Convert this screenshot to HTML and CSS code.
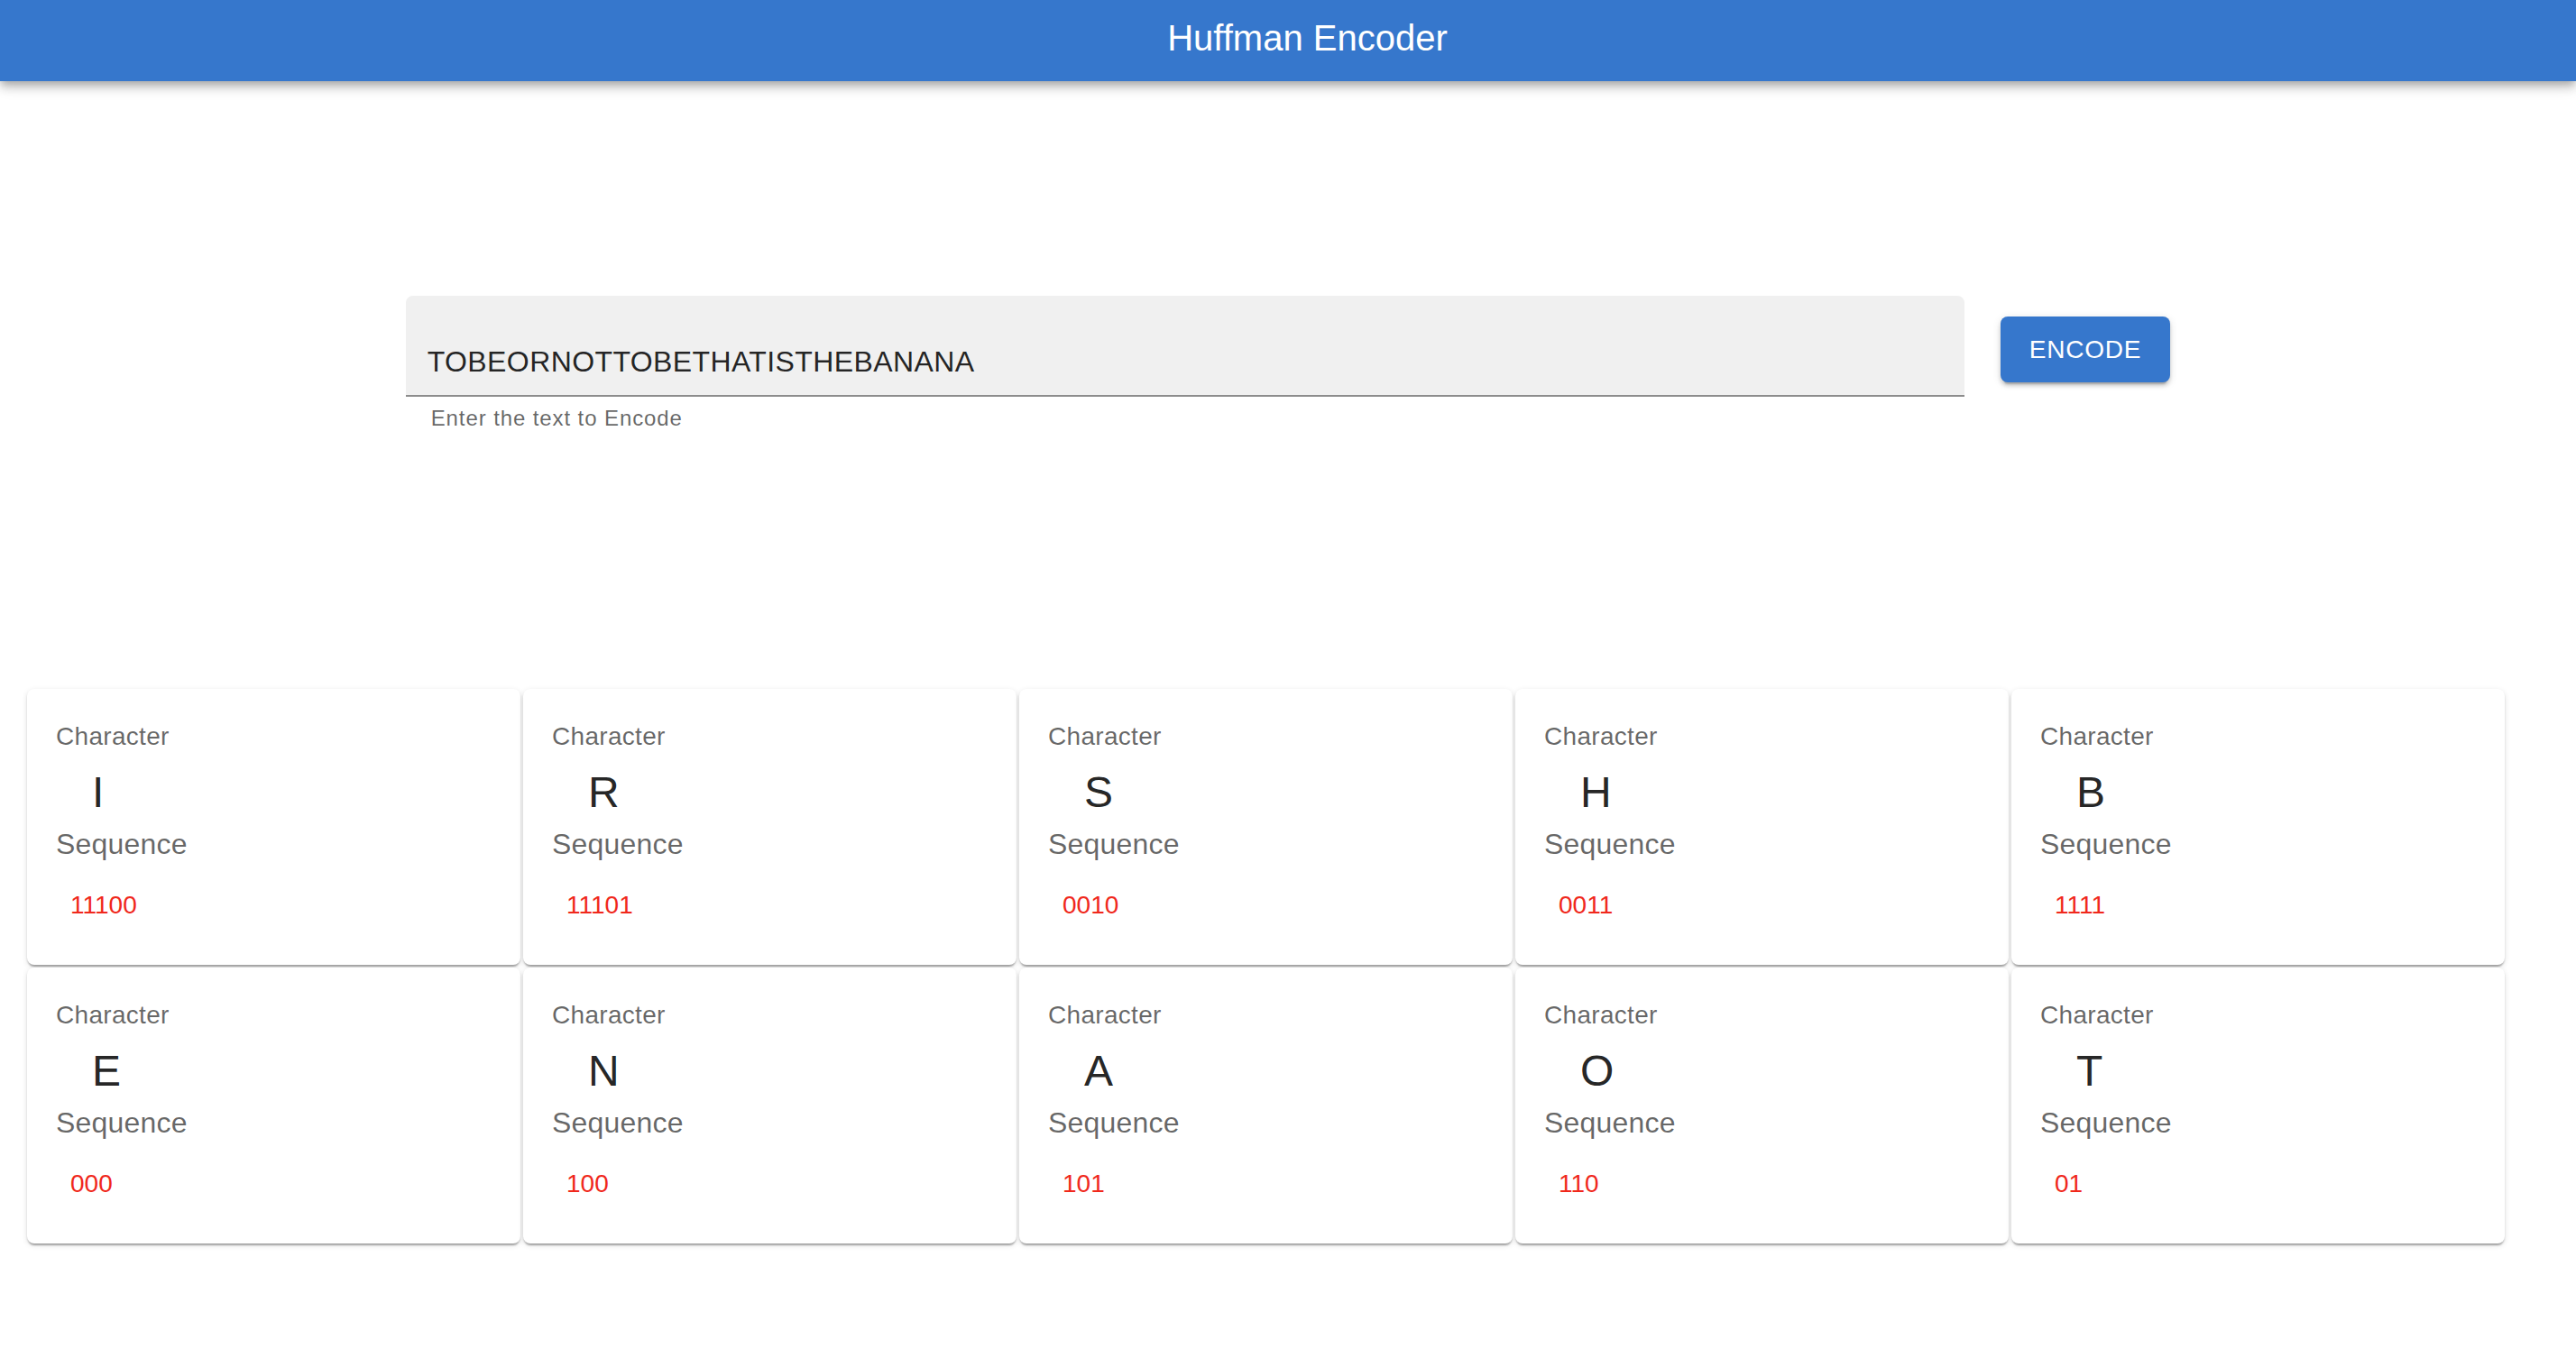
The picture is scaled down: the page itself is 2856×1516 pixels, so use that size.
FILE: index.html
```html
<!DOCTYPE html>
<html lang="en">
<head>
<meta charset="utf-8">
<title>Huffman Encoder</title>
<link rel="stylesheet" href="styles.css">
</head>
<body>
<header class="appbar">
  <h1 class="appbar-title">Huffman Encoder</h1>
</header>
<main class="page">
  <section class="encoder">
    <div class="field">
      <div class="input-box"><span class="input-text">TOBEORNOTTOBETHATISTHEBANANA</span></div>
      <p class="helper">Enter the text to Encode</p>
    </div>
    <button class="btn" type="button">ENCODE</button>
  </section>
  <section class="cards">
    <div class="card"><p class="card-label">Character</p><p class="card-char">I</p><p class="card-seq-label">Sequence</p><p class="card-seq">11100</p></div>
    <div class="card"><p class="card-label">Character</p><p class="card-char">R</p><p class="card-seq-label">Sequence</p><p class="card-seq">11101</p></div>
    <div class="card"><p class="card-label">Character</p><p class="card-char">S</p><p class="card-seq-label">Sequence</p><p class="card-seq">0010</p></div>
    <div class="card"><p class="card-label">Character</p><p class="card-char">H</p><p class="card-seq-label">Sequence</p><p class="card-seq">0011</p></div>
    <div class="card"><p class="card-label">Character</p><p class="card-char">B</p><p class="card-seq-label">Sequence</p><p class="card-seq">1111</p></div>
    <div class="card"><p class="card-label">Character</p><p class="card-char">E</p><p class="card-seq-label">Sequence</p><p class="card-seq">000</p></div>
    <div class="card"><p class="card-label">Character</p><p class="card-char">N</p><p class="card-seq-label">Sequence</p><p class="card-seq">100</p></div>
    <div class="card"><p class="card-label">Character</p><p class="card-char">A</p><p class="card-seq-label">Sequence</p><p class="card-seq">101</p></div>
    <div class="card"><p class="card-label">Character</p><p class="card-char">O</p><p class="card-seq-label">Sequence</p><p class="card-seq">110</p></div>
    <div class="card"><p class="card-label">Character</p><p class="card-char">T</p><p class="card-seq-label">Sequence</p><p class="card-seq">01</p></div>
  </section>
</main>
</body>
</html>
```
FILE: styles.css
```css
* {
  box-sizing: border-box;
}

html, body {
  margin: 0;
  padding: 0;
  background: #ffffff;
}

body {
  font-family: "Liberation Sans", Arial, Helvetica, sans-serif;
  color: rgba(0, 0, 0, 0.87);
}

p, h1 {
  margin: 0;
}

.appbar {
  position: relative;
  z-index: 2;
  height: 90px;
  background: #3677cc;
  display: flex;
  justify-content: center;
  padding: 0 0 6px 43px;
  box-shadow: 0 4px 8px -2px rgba(0, 0, 0, 0.2), 0 8px 10px 0 rgba(0, 0, 0, 0.14), 0 2px 20px 0 rgba(0, 0, 0, 0.12);
}

.appbar-title {
  font-size: 40px;
  font-weight: 400;
  line-height: 84px;
  color: #ffffff;
}

.page {
  padding: 238px 0 80px;
}

.encoder {
  display: flex;
  justify-content: center;
  align-items: flex-start;
  gap: 40px;
  height: 156px;
}

.field {
  width: 1728px;
}

.input-box {
  height: 112px;
  background: #f0f0f0;
  border-radius: 8px 8px 0 0;
  border-bottom: 2px solid #8c8c8c;
  padding: 54px 24px 0;
}

.input-text {
  display: block;
  font-size: 32px;
  line-height: 38px;
  letter-spacing: 0.4px;
  color: rgba(0, 0, 0, 0.87);
}

.helper {
  margin: 4px 0 0 28px;
  font-size: 24px;
  line-height: 40px;
  color: rgba(0, 0, 0, 0.6);
  letter-spacing: 0.9px;
}

.btn {
  margin-top: 23px;
  height: 73px;
  padding: 12px 32px;
  border: none;
  border-radius: 8px;
  background: #3677cc;
  color: #ffffff;
  font-family: "Liberation Sans", Arial, Helvetica, sans-serif;
  font-size: 28px;
  line-height: 49px;
  letter-spacing: 0.8px;
  box-shadow: 0 6px 2px -4px rgba(0, 0, 0, 0.2), 0 4px 4px 0 rgba(0, 0, 0, 0.14), 0 2px 10px 0 rgba(0, 0, 0, 0.12);
  cursor: pointer;
}

.cards {
  margin-top: 280px;
  padding-left: 30px;
  display: grid;
  grid-template-columns: repeat(5, 547px);
  grid-auto-rows: 306px;
  gap: 3px;
}

.card {
  background: #ffffff;
  border-radius: 8px;
  padding: 33px 32px 0;
  box-shadow: 0 4px 2px -2px rgba(0, 0, 0, 0.2), 0 2px 2px 0 rgba(0, 0, 0, 0.14), 0 2px 6px 0 rgba(0, 0, 0, 0.12);
}

.card-label {
  font-size: 28px;
  line-height: 40px;
  letter-spacing: 0.3px;
  margin-bottom: 14px;
  color: rgba(0, 0, 0, 0.6);
}

.card-char {
  font-size: 48px;
  line-height: 56px;
  margin: 0 0 5px 40px;
  color: rgba(0, 0, 0, 0.87);
}

.card-seq-label {
  font-size: 32px;
  line-height: 48px;
  letter-spacing: 0.2px;
  margin-bottom: 24px;
  color: rgba(0, 0, 0, 0.6);
}

.card-seq {
  font-size: 28px;
  line-height: 40px;
  margin-left: 16px;
  color: #f0281c;
}
```
